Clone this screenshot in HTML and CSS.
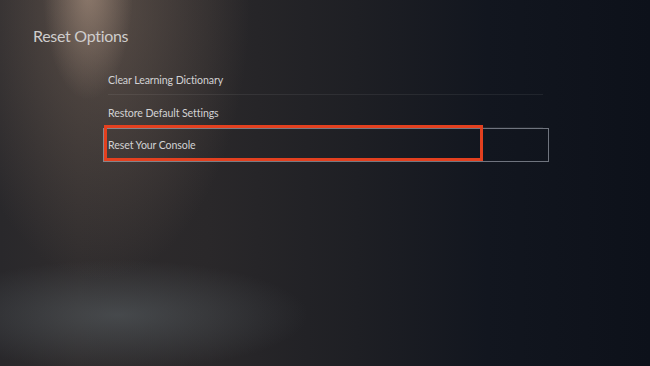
FILE: index.html
```html
<!DOCTYPE html>
<html lang="en">
<head>
<meta charset="utf-8">
<title>Reset Options</title>
<link rel="stylesheet" href="styles.css">
</head>
<body>
<main class="screen">
  <h1 class="title">Reset Options</h1>
  <ul class="menu">
    <li class="row">Clear Learning Dictionary</li>
    <li class="row">Restore Default Settings</li>
    <li class="row selected">Reset Your Console<span class="annotation"></span></li>
  </ul>
</main>
</body>
</html>
```

FILE: styles.css
```css
html, body {
  margin: 0;
  padding: 0;
}
body {
  width: 650px;
  height: 366px;
  overflow: hidden;
  font-family: "Lato", "Liberation Sans", sans-serif;
}
.screen {
  width: 650px;
  height: 366px;
  box-sizing: border-box;
  padding-top: 26px;
  background:
    radial-gradient(ellipse 45px 110px at 88px -10px, rgba(175,150,132,0.6), rgba(175,150,132,0) 100%),
    radial-gradient(ellipse 150px 280px at 100px 0px, rgba(125,106,93,0.55), rgba(125,106,93,0) 100%),
    radial-gradient(ellipse 190px 55px at 118px 315px, rgba(100,110,115,0.45), rgba(100,110,115,0) 100%),
    linear-gradient(90deg, #29282b 0%, #2f2c2d 12%, #2a282a 32%, #1e1f24 55%, #12161f 75%, #0d111a 100%);
}
.title {
  margin: 0 0 16px 33px;
  font-size: 16px;
  line-height: 20px;
  font-weight: 400;
  letter-spacing: -0.3px;
  color: #cfcdcc;
}
.menu {
  list-style: none;
  margin: 0 0 0 103px;
  padding: 0;
  width: 446px;
}
.row {
  height: 33px;
  box-sizing: border-box;
  margin: 0 6px 0 5px;
  padding-top: 3px;
  line-height: 30px;
  font-size: 10.6px;
  letter-spacing: -0.1px;
  color: #d2d2d4;
  border-bottom: 1px solid rgba(255,255,255,0.07);
}
.row.selected {
  position: relative;
  height: 34px;
  margin: 0;
  padding: 1px 0 0 4px;
  border: 1px solid rgba(190,195,205,0.55);
}
.annotation {
  position: absolute;
  left: 0;
  top: -4px;
  width: 379px;
  height: 36px;
  box-sizing: border-box;
  border: 3px solid #e3401f;
}
```
